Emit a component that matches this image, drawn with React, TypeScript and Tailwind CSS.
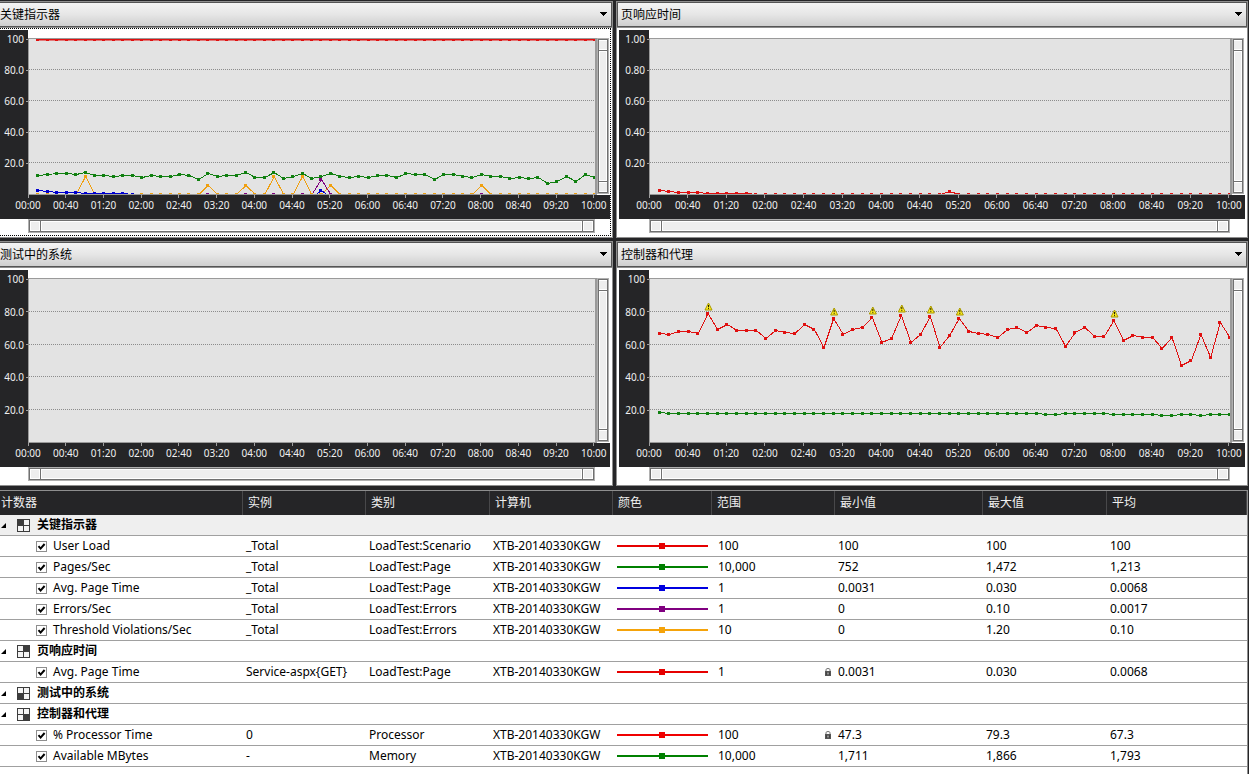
import { useId, useState } from "react";

type Series = { color: string; data: number[]; width?: number };

const repeat = (value: number, count: number): number[] => Array(count).fill(value);

const withPeaks = (peaks: Record<number, number>, head: number[] = []): number[] =>
  Array.from({ length: 60 }, (_, i) => peaks[i + 1] ?? head[i] ?? 0);

const RED = "#e01010";
const GREEN = "#108010";
const BLUE = "#0000d0";
const PURPLE = "#800080";
const ORANGE = "#f0a010";

const pagesPerSec = [
  12, 12.7, 13.3, 13.3, 12.7, 14, 12, 12, 11.4, 12, 12, 10.8, 12, 11.4, 11.4, 12.7, 12, 9.5, 13.3, 11.4, 12, 12, 14,
  10.8, 10.8, 14, 10.1, 11.4, 13.3, 10.1, 11.4, 13.3, 11.4, 10.8, 11.4, 10.8, 12, 12, 10.8, 13.3, 12.7, 12.7, 9.5,
  12.7, 12.7, 11.4, 10.8, 12.7, 11.4, 11.4, 10.1, 10.8, 10.1, 10.8, 6.9, 8.2, 11.4, 8.2, 12.7, 10.8,
];

const processorTime = [
  66.8, 66.2, 68, 68, 66.8, 79, 69.2, 72.3, 68.6, 68.6, 68.6, 63.7, 68.6, 67.4, 66.8, 72.3, 69.2, 58.2, 75.9, 66.2,
  69.2, 70.4, 76.5, 61.3, 63.7, 78, 61.3, 66.2, 77.1, 58.2, 65.6, 75.9, 68, 66.8, 66.2, 64.3, 69.2, 70.4, 67.4, 71.7,
  70.4, 69.8, 58.8, 67.4, 70.4, 64.9, 64.9, 74.7, 62.5, 65.6, 64.3, 64.3, 57.6, 64.3, 47.3, 50.3, 66.2, 52.1, 73.5,
  64.3,
];

const availableMBytes = [
  18.6, ...repeat(18, 39), 17.4, 17.4, ...repeat(18, 5), ...repeat(17.4, 5), 16.8, 16.8, 17.4, 17.4, 16.8, 17.4, 17.4,
  17.4,
];

const keyIndicators: Series[] = [
  { color: PURPLE, data: withPeaks({ 31: 9.5 }) },
  { color: ORANGE, data: withPeaks({ 6: 11.4, 19: 5.6, 23: 5.6, 26: 11.4, 29: 11.4, 32: 5.6, 48: 5.6 }) },
  { color: BLUE, data: withPeaks({ 31: 2.4 }, [2.4, 1.8, 1.3, 1.3, 1.3, ...repeat(0.7, 5)]).map((v, i) => (i > 10 && v === 0 ? -2 : v)) },
  { color: GREEN, data: pagesPerSec },
  { color: RED, data: repeat(100, 60), width: 2 },
];

const pageResponse: Series[] = [
  { color: RED, data: withPeaks({ 31: 2.2 }, [2.4, 1.8, 1.3, 1.3, 1.3, ...repeat(0.7, 5)]) },
];

const controllers: Series[] = [
  { color: GREEN, data: availableMBytes },
  { color: RED, data: processorTime },
];

const percentTicks = ["100", "80.0", "60.0", "40.0", "20.0"];
const unitTicks = ["1.00", "0.80", "0.60", "0.40", "0.20"];
const timeTicks = Array.from({ length: 16 }, (_, i) => {
  const s = i * 40;
  return `${String(Math.floor(s / 60)).padStart(2, "0")}:${String(s % 60).padStart(2, "0")}`;
});

function Plot({ series, height, warnings }: { series: Series[]; height: number; warnings: number[] }) {
  const x = (i: number) => `${((i + 1) / 60) * 100}%`;
  const y = (v: number) => Math.round(height * (1 - v / 100)) + 0.5;
  const gridY = (v: number) => Math.ceil(height * (1 - v / 100)) - 0.5;
  return (
    <svg className="block w-full overflow-hidden" height={height} role="img" aria-label="图表">
      {[20, 40, 60, 80].map((v) => (
        <line key={v} x1="0" x2="100%" y1={gridY(v)} y2={gridY(v)} stroke="#8c8c8c" strokeDasharray="1 1" />
      ))}
      {series.map((s, n) => (
        <g key={n} stroke={s.color} fill={s.color} strokeWidth={s.width ?? 1}>
          {s.data.slice(1).map((v, i) => (
            <line
              key={i}
              x1={x(i)}
              y1={y(s.data[i])}
              x2={x(i + 1)}
              y2={y(v)}
              shapeRendering={y(v) === y(s.data[i]) ? "auto" : "crispEdges"}
            />
          ))}
          {s.data.map((v, i) => (
            <rect
              key={i}
              x={x(i)}
              y={y(v) - 1.5}
              width="3"
              height="3"
              stroke="none"
              transform="translate(-2)"
              shapeRendering="crispEdges"
            />
          ))}
        </g>
      ))}
      {warnings.map((p) => (
        <svg key={p} x={x(p - 1)} y={y(processorTime[p - 1]) - 11} width="8" height="9" overflow="visible">
          <g transform="translate(-3 0)">
            <path d="M3.5 0.5 L7 7.5 H0 Z" fill="#ffee20" stroke="#a89800" strokeWidth="1" />
            <path d="M3.5 2.5 V4.8 M3.5 5.6 V6.6" stroke="#202000" strokeWidth="1" />
          </g>
        </svg>
      ))}
    </svg>
  );
}

function Thumb({ label }: { label: string }) {
  return <button type="button" aria-label={label} className="size-[10px] shrink-0 border border-white bg-[#eeeeee]" />;
}

function RangeBar({ vertical = false }: { vertical?: boolean }) {
  return vertical ? (
    <div className="m-px flex w-[10px] flex-col items-center overflow-hidden border border-[#707070] bg-[#eeeeee] outline outline-[#b0b0b0]">
      <Thumb label="上限" />
      <div className="w-full flex-1 border-y border-[#707070]">
        <div className="h-full border border-white" />
      </div>
      <Thumb label="下限" />
    </div>
  ) : (
    <div className="m-px flex h-3 items-center border border-[#707070] bg-[#eeeeee] outline outline-[#b0b0b0]">
      <Thumb label="开始时间" />
      <div className="h-full flex-1 border-x border-[#707070]">
        <div className="h-full border border-white" />
      </div>
      <Thumb label="结束时间" />
    </div>
  );
}

const panelNames = ["关键指示器", "页响应时间", "测试中的系统", "控制器和代理"];

type PanelProps = {
  title: string;
  ticks: string[];
  series?: Series[];
  height: number;
  warnings?: number[];
  side: "left" | "right";
  focused?: boolean;
};

function Panel({ title, ticks, series = [], height, warnings = [], side, focused = false }: PanelProps) {
  const right = side === "right";
  return (
    <section className={`border-y border-r border-[#8e8e8e] bg-white ${right ? "border-l" : ""}`}>
      <div className="relative border-b border-[#8e8e8e]">
        <select
          aria-label="图表"
          defaultValue={title}
          className={`block h-[25px] w-full appearance-none border-y border-r border-[#555] bg-linear-to-b from-[#f4f4f4] from-0% via-[#e6e6e6] via-50% to-[#cfcfcf] text-[12px] text-black ${right ? "border-l pl-[3px]" : ""}`}
        >
          {panelNames.map((n) => (
            <option key={n}>{n}</option>
          ))}
        </select>
        <svg className="pointer-events-none absolute top-[10px] right-[5px]" width="7" height="4" shapeRendering="crispEdges">
          <path d="M0 0 H7 L3.5 4 Z" fill="#000" />
        </svg>
      </div>
      <div
        className={`${focused ? "mr-px border-t border-r border-b border-dotted border-black pt-px pb-[2px]" : "pr-[2px] pt-[2px] pb-1"} ${right ? "pl-[2px]" : ""}`}
      >
        <div className="flex">
          <div
            className={`flex shrink-0 flex-col justify-between bg-[#252527] ${height > 160 ? "pb-6" : "pb-[23px]"} ${right ? "w-[30px]" : "w-7"}`}
          >
            {ticks.map((t) => (
              <div key={t} className="flex items-center justify-end gap-[2px] text-[10px] leading-[18px] text-[#f0f0f0]">
                {t}
                <span className="h-px w-[2px] bg-[#a0a0a0]" />
              </div>
            ))}
          </div>
          <div className="min-w-0 flex-1 pt-2">
            <div className="border-y border-r-2 border-l border-[#9a9a9a] bg-[#e3e3e3]">
              <Plot series={series} height={height} warnings={warnings} />
            </div>
          </div>
          <div className="mr-px flex pt-2 pb-px">
            <RangeBar vertical />
          </div>
        </div>
        <div className={`flex h-6 justify-between bg-[#252527] pr-[2px] ${right ? "pl-4" : "pl-[14px]"}`}>
          {timeTicks.map((t) => (
            <div key={t} className="flex w-7 flex-col items-center text-[10px] leading-[14px] text-[#f0f0f0]">
              <span className="h-[3px] w-px bg-[#a0a0a0]" />
              {t}
            </div>
          ))}
        </div>
        <div className={`mr-[15px] flow-root ${right ? "ml-[30px]" : "ml-7"}`}>
          <RangeBar />
        </div>
      </div>
    </section>
  );
}

type Counter = {
  name: string;
  instance: string;
  category: string;
  color: string;
  range: string;
  locked?: boolean;
  min: string;
  max: string;
  avg: string;
};

const groups: { name: string; counters: Counter[] }[] = [
  {
    name: "关键指示器",
    counters: [
      { name: "User Load", instance: "_Total", category: "LoadTest:Scenario", color: "#e60000", range: "100", min: "100", max: "100", avg: "100" },
      { name: "Pages/Sec", instance: "_Total", category: "LoadTest:Page", color: "#008000", range: "10,000", min: "752", max: "1,472", avg: "1,213" },
      { name: "Avg. Page Time", instance: "_Total", category: "LoadTest:Page", color: "#0000e0", range: "1", min: "0.0031", max: "0.030", avg: "0.0068" },
      { name: "Errors/Sec", instance: "_Total", category: "LoadTest:Errors", color: "#800080", range: "1", min: "0", max: "0.10", avg: "0.0017" },
      { name: "Threshold Violations/Sec", instance: "_Total", category: "LoadTest:Errors", color: "#f5a30a", range: "10", min: "0", max: "1.20", avg: "0.10" },
    ],
  },
  {
    name: "页响应时间",
    counters: [
      { name: "Avg. Page Time", instance: "Service-aspx{GET}", category: "LoadTest:Page", color: "#e60000", range: "1", locked: true, min: "0.0031", max: "0.030", avg: "0.0068" },
    ],
  },
  { name: "测试中的系统", counters: [] },
  {
    name: "控制器和代理",
    counters: [
      { name: "% Processor Time", instance: "0", category: "Processor", color: "#f00000", range: "100", locked: true, min: "47.3", max: "79.3", avg: "67.3" },
      { name: "Available MBytes", instance: "-", category: "Memory", color: "#008000", range: "10,000", min: "1,711", max: "1,866", avg: "1,793" },
    ],
  },
];

const quadrants = [
  [1, 1],
  [7, 1],
  [1, 7],
  [7, 7],
];

function QuadrantIcon({ active }: { active: number }) {
  const [qx, qy] = quadrants[active];
  return (
    <svg width="13" height="13" shapeRendering="crispEdges" aria-hidden="true">
      <rect x="0.5" y="0.5" width="12" height="12" fill="#f4f4f4" stroke="#3c3c3c" />
      <path d="M6.5 0 V13 M0 6.5 H13" stroke="#3c3c3c" />
      <rect x={qx} y={qy} width="5" height="5" fill="#3c3c3c" />
    </svg>
  );
}

function LockIcon() {
  return (
    <svg width="6" height="8" aria-label="已锁定" role="img">
      <path d="M1 3 V1.8 Q1 0.5 3 0.5 Q5 0.5 5 1.8 V3" fill="none" stroke="#707070" />
      <rect x="0.5" y="3.5" width="5" height="4" fill="#444" stroke="#555" />
      <rect x="2.5" y="4.5" width="1" height="2" fill="#ddd" />
    </svg>
  );
}

const cell = "border-b border-[#a0a0a0] p-0 pl-[3px]";

function CounterRow({ counter }: { counter: Counter }) {
  const id = useId();
  const [checked, setChecked] = useState(true);
  return (
    <tr className="h-[21px]">
      <td className="border-b border-[#a0a0a0] p-0 pl-9">
        <div className="flex items-center gap-[6px]">
          <span className="grid size-[11px]">
            <input
              id={id}
              type="checkbox"
              checked={checked}
              onChange={(e) => setChecked(e.target.checked)}
              className="col-start-1 row-start-1 size-[11px] appearance-none border border-[#8e8e8e] bg-white"
            />
            {checked && (
              <svg className="pointer-events-none col-start-1 row-start-1" width="11" height="11">
                <path d="M2.5 5.2 L4.6 7.6 L8.6 3" fill="none" stroke="#000" strokeWidth="2" />
              </svg>
            )}
          </span>
          <label htmlFor={id}>{counter.name}</label>
        </div>
      </td>
      <td className={cell}>{counter.instance}</td>
      <td className={cell}>{counter.category}</td>
      <td className={cell}>XTB-20140330KGW</td>
      <td className="border-b border-[#a0a0a0] p-0 pl-1">
        <svg className="block" width="91" height="6" shapeRendering="crispEdges" aria-hidden="true">
          <rect y="2" width="91" height="2" fill={counter.color} />
          <rect x="42" width="6" height="6" fill={counter.color} />
        </svg>
      </td>
      <td className="border-b border-[#a0a0a0] p-0 pr-1 pl-[6px]">
        <div className="flex items-center justify-between">
          {counter.range}
          {counter.locked && <LockIcon />}
        </div>
      </td>
      <td className={cell}>{counter.min}</td>
      <td className={cell}>{counter.max}</td>
      <td className={cell}>{counter.avg}</td>
    </tr>
  );
}

const headings = ["实例", "类别", "计算机", "颜色", "范围", "最小值", "最大值", "平均"];

function CounterTable() {
  return (
    <table className="w-full table-fixed border-separate border-spacing-0 text-left text-[12px] leading-4 whitespace-nowrap text-black">
      <colgroup>
        <col className="w-[243px]" />
        <col className="w-[123px]" />
        <col className="w-[124px]" />
        <col className="w-[123px]" />
        <col className="w-[99px]" />
        <col className="w-[123px]" />
        <col className="w-[148px]" />
        <col className="w-[124px]" />
        <col />
      </colgroup>
      <thead>
        <tr className="h-6 bg-[#252527] text-[#f0f0f0]">
          <th className="border-r border-[#48484a] p-0 pl-px font-normal">计数器</th>
          {headings.map((h) => (
            <th key={h} className="border-r border-[#48484a] p-0 pl-[5px] font-normal">
              {h}
            </th>
          ))}
        </tr>
      </thead>
      {groups.map((g, i) => (
        <tbody key={g.name}>
          <tr className={`h-[21px] ${i === 0 ? "bg-[#efefef]" : ""}`}>
            <th colSpan={9} className="border-b border-[#a0a0a0] p-0 pl-px font-bold">
              <div className="flex items-center">
                <button type="button" aria-label="折叠" className="mr-[11px]">
                  <svg className="block" width="5" height="5">
                    <path d="M5 0 V5 H0 Z" fill="#000" />
                  </svg>
                </button>
                <QuadrantIcon active={i} />
                <span className="ml-[7px]">{g.name}</span>
              </div>
            </th>
          </tr>
          {g.counters.map((c) => (
            <CounterRow key={c.name} counter={c} />
          ))}
        </tbody>
      ))}
    </table>
  );
}

export default function App() {
  return (
    <main className="flex min-h-screen flex-col gap-1 bg-[#252527] pt-px pr-px font-['Noto_Sans','Noto_Sans_CJK_SC',sans-serif]">
      <div className="grid grid-cols-[613fr_632fr] gap-[3px]">
        <Panel title="关键指示器" ticks={percentTicks} series={keyIndicators} height={155} side="left" focused />
        <Panel title="页响应时间" ticks={unitTicks} series={pageResponse} height={155} side="right" />
        <Panel title="测试中的系统" ticks={percentTicks} height={163} side="left" />
        <Panel
          title="控制器和代理"
          ticks={percentTicks}
          series={controllers}
          height={163}
          side="right"
          warnings={[6, 19, 23, 26, 29, 32, 48]}
        />
      </div>
      <div className="flex-1 border-t border-r border-[#8e8e8e] bg-white">
        <CounterTable />
      </div>
    </main>
  );
}
